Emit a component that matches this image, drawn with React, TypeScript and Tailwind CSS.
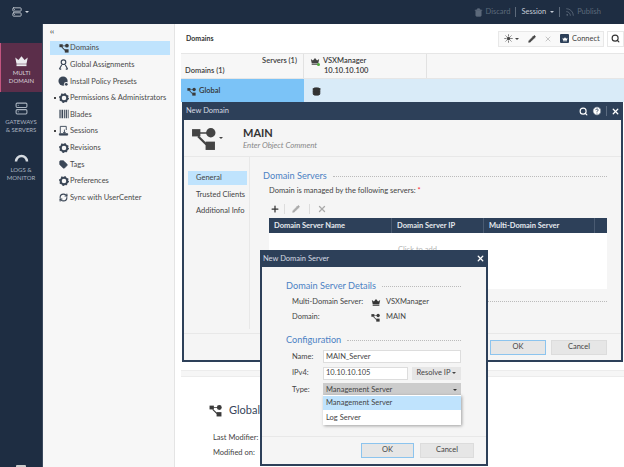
import { Search, HelpCircle, X, Plus, Pencil, Trash2, Rss, RefreshCw, Tag, Server, Database, Sun } from "lucide-react";

const font = { fontFamily: 'Lato, "Noto Sans", sans-serif' };

function Caret({ className = "" }: { className?: string }) {
  return <span className={`inline-block h-0 w-0 border-x-[2px] border-t-[2px] border-x-transparent border-t-current ${className}`} />;
}

function TreeIcon({ size = 12, color = "#3a3a3a" }: { size?: number; color?: string }) {
  return (
    <svg width={size} height={size} viewBox="0 0 24 24" fill={color}>
      <rect x="1" y="3" width="8" height="7" />
      <circle cx="19" cy="6.5" r="4.5" />
      <rect x="14" y="15" width="9" height="8" />
      <path d="M8 6h8v1.500H8zM7.500 9l8 8-1.500 1.500-8-8z" />
    </svg>
  );
}

function CrownIcon({ size = 12, color = "#333" }: { size?: number; color?: string }) {
  return (
    <svg width={size} height={size} viewBox="0 0 24 24" fill={color}>
      <path d="M2 7l5 4 5-6 5 6 5-4-2 10H4z" />
      <rect x="4" y="18" width="16" height="3" />
    </svg>
  );
}

function GearIcon() {
  return (
    <svg width="10" height="10" viewBox="0 0 24 24">
      <circle cx="12" cy="12" r="8" fill="none" stroke="#3a4656" strokeWidth="5" />
      <circle cx="12" cy="12" r="10.500" fill="none" stroke="#3a4656" strokeWidth="3" strokeDasharray="3.500 4.700" />
    </svg>
  );
}

function GaugeArc() {
  return (
    <svg width="15" height="10" viewBox="0 0 30 20" fill="none" stroke="#d5dae0" strokeWidth="5">
      <path d="M4 19a11 11 0 0 1 22 0" />
    </svg>
  );
}

function NavIcon({ kind }: { kind: string }) {
  if (kind === "tree") return <TreeIcon size={10} />;
  if (kind === "gear") return <GearIcon />;
  if (kind === "tag") return <Tag size={9} fill="#3a4656" color="#3a4656" />;
  if (kind === "sync") return <RefreshCw size={9} color="#3a4656" strokeWidth={3} />;
  if (kind === "person")
    return (
      <svg width="11" height="11" viewBox="0 0 24 24" fill="none" stroke="#3a4656" strokeWidth="2.500">
        <circle cx="12" cy="7" r="5" />
        <path d="M3 22l5-9M21 22l-5-9M3 22h4M17 22h4" />
      </svg>
    );
  if (kind === "preset")
    return (
      <svg width="11" height="11" viewBox="0 0 24 24" fill="#3a4656">
        <circle cx="11" cy="11" r="10" />
        <circle cx="18" cy="18" r="5" fill="#f7f7f7" />
        <circle cx="18" cy="18" r="3" />
      </svg>
    );
  if (kind === "blades")
    return (
      <svg width="10" height="10" viewBox="0 0 24 24" fill="#3a4656">
        <path d="M1 2h3v20H1zM6 2h4v20H6zM12 2h2v20h-2zM16 2h3v20h-3zM21 2h2v20h-2z" />
      </svg>
    );
  return (
    <svg width="11" height="11" viewBox="0 0 24 24" fill="none" stroke="#3a4656" strokeWidth="2">
      <path d="M5 18V3h13v8" />
      <path d="M3 19h18v3H3z" fill="#3a4656" />
      <path d="M14 10v8M11 15l3 3 3-3" />
    </svg>
  );
}

const navItems = [
  { label: "Domains", icon: "tree", active: true },
  { label: "Global Assignments", icon: "person" },
  { label: "Install Policy Presets", icon: "preset" },
  { label: "Permissions & Administrators", icon: "gear", arrow: true },
  { label: "Blades", icon: "blades" },
  { label: "Sessions", icon: "session", arrow: true },
  { label: "Revisions", icon: "gear" },
  { label: "Tags", icon: "tag" },
  { label: "Preferences", icon: "gear" },
  { label: "Sync with UserCenter", icon: "sync" },
];

function LeftRail() {
  return (
    <div className="flex w-[42px] shrink-0 flex-col pt-[19px] text-[6px] leading-[7.500px] text-[#aab4c0]">
      <div className="flex h-[49px] flex-col items-center border-l border-[#c2557f] bg-[#5b2e4a] pt-[10px] text-center text-[#d9d3d9]">
        <CrownIcon size={15} color="#ecebef" />
        <div className="mt-[1px]">MULTI<br />DOMAIN</div>
      </div>
      <div className="mt-[10px] flex flex-col items-center text-center">
        <Server size={13} color="#aab4c0" />
        <div className="mt-[3px]">GATEWAYS<br />&amp; SERVERS</div>
      </div>
      <div className="mt-[19px] flex flex-col items-center text-center">
        <GaugeArc />
        <div className="mt-[4px]">LOGS &amp;<br />MONITOR</div>
      </div>
      <div className="mx-auto mt-auto h-[2px] w-[10px] rounded-t-[1px] bg-[#ccc]" />
    </div>
  );
}

function Sidebar() {
  return (
    <div className="w-[133px] shrink-0 border-x border-[#e4e4e4] border-l-[#3b4a5e] bg-[#f7f7f7] pl-[7px] pr-1 text-[7.500px] text-[#4a4a4a]">
      <div className="h-[17px] text-[7px] font-bold leading-[14px] text-[#333]">‹‹</div>
      <div className="flex flex-col gap-[2.600px]">
        {navItems.map((item) => (
          <div key={item.label} className={`relative flex h-[14px] items-center gap-[1px] pl-[8px] ${item.active ? "bg-[#bfe3fd]" : ""}`}>
            {item.arrow && <span className="absolute left-[4px] top-[6px] h-[2px] w-[2px] bg-[#444]" />}
            <span className="flex w-[11px] justify-center">
              <NavIcon kind={item.icon} />
            </span>
            <span className="whitespace-nowrap">{item.label}</span>
          </div>
        ))}
      </div>
    </div>
  );
}

function MainPanel() {
  return (
    <div className="flex min-w-0 flex-1 flex-col bg-white pl-[6px]">
      <div className="flex h-[29px] items-center justify-between pl-[5px]">
        <span className="text-[7px] font-bold text-[#333]">Domains</span>
        <div className="flex items-center">
          <div className="flex h-[16px] w-[106px] items-center border border-[#e8e8e8] bg-[#f9f9f9] pl-[5px] text-[#444]">
            <Sun size={9} fill="#444" />
            <Caret className="ml-[2px]" />
            <Pencil size={8} fill="#444" className="ml-[9px]" />
            <X size={8} color="#aaa" className="ml-[8px]" />
            <span className="ml-[8px] flex items-center gap-[3px] text-[7.500px]">
              <span className="flex h-[9px] w-[9px] items-center justify-center rounded-[1px] bg-[#2d4059]">
                <CrownIcon size={6} color="#fff" />
              </span>
              Connect
            </span>
          </div>
          <div className="ml-[3px] flex h-[16px] w-[17px] items-center border border-[#e8e8e8] pl-[3px]">
            <Search size={9} color="#333" strokeWidth={3} />
          </div>
        </div>
      </div>
      <div className="flex h-[26px] border-y border-[#e6e6e6] bg-[#f7f7f7] text-[7.500px] font-semibold text-[#3a3a3a]">
        <div className="flex w-[123px] flex-col border-r border-[#e2e2e2] px-[1px] pt-[2px] leading-[10px]">
          <div className="pr-[5px] text-right">Servers (1)</div>
          <div className="pl-[3px]">Domains (1)</div>
        </div>
        <div className="w-[123px] border-r border-[#e2e2e2] pl-[6px] pt-[2px] leading-[10px]">
          <div className="flex items-center gap-[3px]">
            <span className="relative">
              <CrownIcon size={10} color="#444" />
              <span className="absolute bottom-0 right-0 h-[3px] w-[3px] rounded-full bg-[#4fae3c]" />
            </span>
            VSXManager
          </div>
          <div className="pl-[14px]">10.10.10.100</div>
        </div>
      </div>
      <div className="flex h-[23px] bg-[#d9ebf8] pt-[1px] text-[7.500px] font-semibold text-[#333]">
        <div className="-mt-[1px] flex w-[123px] items-center gap-[3px] bg-[#7bc3f7] pl-[6px] pt-[1px]">
          <TreeIcon size={9} />
          Global
        </div>
        <div className="flex items-center pl-[8px]">
          <Database size={9} color="#333" fill="#333" />
        </div>
      </div>
      <div className="h-[259px] shrink-0" />
      <div className="mt-[9px] h-[7px] border-y border-[#ececec] bg-[#f6f6f6]" />
      <div className="flex-1 pl-[28px] pt-[25px] text-[7.500px] text-[#444]">
        <div className="flex items-center gap-[7px] text-[11px] text-[#38465a]">
          <TreeIcon size={13} />
          Global
        </div>
        <div className="ml-[4px] mt-[11px] leading-[15px]">
          Last Modifier:
          <br />
          Modified on:
        </div>
      </div>
    </div>
  );
}

function Heading({ text }: { text: string }) {
  return (
    <div className="flex items-center gap-[6px] text-[9.200px] leading-[13px] text-[#4c82c4]">
      <span className="whitespace-nowrap">{text}</span>
      <span className="mt-[1px] flex-1 border-t border-dotted border-[#bbb]" />
    </div>
  );
}

function DialogButton({ label, primary, w }: { label: string; primary?: boolean; w: string }) {
  return (
    <div className={`flex h-[15px] items-center justify-center border bg-[#e6e6e6] text-[7.500px] text-[#444] ${w} ${primary ? "border-[#8cc4ee]" : "border-[#dcdcdc]"}`}>
      {label}
    </div>
  );
}

function NewDomainDialog() {
  return (
    <div className="absolute left-[182px] top-[102px] flex h-[260px] w-[441px] flex-col border-2 border-t-0 border-[#2d4059] bg-[#f5f5f5] text-[7.500px] text-[#444]">
      <div className="flex h-[18px] shrink-0 items-center justify-between bg-[#2d4059] pl-[2px] pr-[1px] text-[#d5dbe3]">
        <span>New Domain</span>
        <div className="flex items-center gap-[4px] text-white">
          <Search size={9} strokeWidth={3} />
          <HelpCircle size={10} fill="#fff" color="#2d4059" />
          <span className="h-[10px] border-l border-[#5b6b80]" />
          <X size={9} strokeWidth={3.500} />
        </div>
      </div>
      <div className="flex h-[37px] shrink-0 border-b border-[#e8e8e8]">
        <div className="flex w-[59px] items-center pl-[7px]">
          <TreeIcon size={25} color="#444" />
          <Caret className="ml-[3px] text-[#444]" />
        </div>
        <div className="pt-[6px]">
          <div className="text-[11px] font-bold leading-[13px] text-[#333]">MAIN</div>
          <div className="mt-[1px] text-[7.800px] italic text-[#888]">Enter Object Comment</div>
        </div>
      </div>
      <div className="flex min-h-0 flex-1">
        <div className="mb-[4px] flex w-[66px] shrink-0 flex-col gap-[2.500px] border-r border-[#e8e8e8] pl-[4px] pr-[2px] pt-[14px]">
          <div className="flex h-[14px] items-center bg-[#bfe3fd] pl-[8px]">General</div>
          <div className="flex h-[14px] items-center whitespace-nowrap pl-[8px]">Trusted Clients</div>
          <div className="flex h-[14px] items-center whitespace-nowrap pl-[8px]">Additional Info</div>
        </div>
        <div className="flex-1 pl-[13px] pr-[14px] pt-[12px]">
          <Heading text="Domain Servers" />
          <div className="mt-[4px] pl-[6px] leading-[10px]">
            Domain is managed by the following servers: <span className="text-red-500">*</span>
          </div>
          <div className="mt-[6px] flex h-[14px] items-center pl-[7px]">
            <Plus size={10} color="#333" strokeWidth={3} />
            <span className="ml-[4px] h-[10px] border-l border-[#ddd]" />
            <Pencil size={8} color="#aaa" fill="#aaa" className="ml-[7px]" />
            <span className="ml-[9px] h-[10px] border-l border-[#ddd]" />
            <X size={10} color="#aaa" strokeWidth={3} className="ml-[7px]" />
          </div>
          <div className="ml-[6px] mt-[2px] flex h-[15px] bg-[#2d4059] font-bold text-[#e6eaef]">
            <div className="flex w-[123px] items-center border-r border-[#4a5b72] pl-[5px]">Domain Server Name</div>
            <div className="flex w-[92px] items-center border-r border-[#4a5b72] pl-[5px]">Domain Server IP</div>
            <div className="flex w-[111px] items-center border-r border-[#4a5b72] pl-[5px]">Multi-Domain Server</div>
          </div>
          <div className="ml-[6px] h-[56px] bg-white pl-[129px] pt-[11px] text-[#b5b5b5]">Click to add</div>
          <div className="mt-[12px] border-t border-dotted border-[#bbb]" />
        </div>
      </div>
      <div className="flex h-[27px] shrink-0 items-center justify-end gap-[5px] border-t border-[#e8e8e8] pr-[14px]">
        <DialogButton label="OK" primary w="w-[56px]" />
        <DialogButton label="Cancel" w="w-[56px]" />
      </div>
    </div>
  );
}

function FormRow({ label, children }: { label: string; children: React.ReactNode }) {
  return (
    <div className="flex h-[13px] items-center">
      <span className="w-[31px] shrink-0">{label}</span>
      {children}
    </div>
  );
}

function NewServerDialog() {
  return (
    <div className="absolute left-[260px] top-[250px] flex h-[216px] w-[228px] flex-col border-2 border-t-0 border-[#2d4059] bg-[#f5f5f5] text-[7.500px] text-[#444]">
      <div className="flex h-[17px] shrink-0 items-center justify-between bg-[#2d4059] pl-[1px] pr-[1px] text-[#d5dbe3]">
        <span>New Domain Server</span>
        <X size={9} color="#fff" strokeWidth={3.500} />
      </div>
      <div className="relative flex-1 pl-[24px] pr-[25px] pt-[12px]">
        <Heading text="Domain Server Details" />
        <div className="mt-[4px] flex flex-col gap-[3px] pl-[6px]">
          <div className="flex h-[12px] items-center">
            <span className="w-[79px] whitespace-nowrap">Multi-Domain Server:</span>
            <CrownIcon size={10} color="#333" />
            <span className="ml-[5px]">VSXManager</span>
          </div>
          <div className="flex h-[12px] items-center">
            <span className="w-[79px]">Domain:</span>
            <TreeIcon size={9} />
            <span className="ml-[6px]">MAIN</span>
          </div>
        </div>
        <div className="mt-[10px]">
          <Heading text="Configuration" />
        </div>
        <div className="mt-[4px] flex flex-col gap-[3.500px] pl-[6px]">
          <FormRow label="Name:">
            <div className="flex h-[13px] w-[138px] items-center border border-[#ddd] bg-white pl-[2px]">MAIN_Server</div>
          </FormRow>
          <FormRow label="IPv4:">
            <div className="flex h-[13px] w-[85px] items-center border border-[#ddd] bg-white pl-[2px]">10.10.10.105</div>
            <div className="ml-[4px] flex h-[13px] w-[49px] items-center justify-center gap-[2px] bg-[#e6e6e6]">
              Resolve IP <Caret />
            </div>
          </FormRow>
          <FormRow label="Type:">
            <div className="flex h-[13px] w-[138px] items-center justify-between bg-[#cccccc] pl-[3px] pr-[4px]">
              Management Server <Caret className="text-[#333]" />
            </div>
          </FormRow>
        </div>
        <div className="absolute left-[61px] top-[128px] w-[138px] bg-white pt-[1px] shadow-[1px_1px_3px_rgba(0,0,0,0.35)]">
          <div className="flex h-[14px] items-center bg-[#bfe3fd] pl-[3px]">Management Server</div>
          <div className="flex h-[15px] items-center pl-[3px]">Log Server</div>
        </div>
      </div>
      <div className="flex h-[28px] shrink-0 items-center justify-end gap-[6px] border-t border-[#e8e8e8] pb-[1px] pr-[12px]">
        <DialogButton label="OK" primary w="w-[53px]" />
        <DialogButton label="Cancel" w="w-[54px]" />
      </div>
    </div>
  );
}

export default function App() {
  return (
    <div className="relative flex h-[467px] w-[624px] flex-col overflow-hidden bg-[#1e2d42]" style={font}>
      <div className="flex h-[24px] shrink-0 items-center text-[7.500px] text-[#5d6a7b]">
        <div className="ml-[12px] flex items-center gap-[3px] text-[#cfd5dc]">
          <Server size={10} />
          <Caret />
        </div>
        <div className="ml-auto flex items-center pr-[23px]">
          <Trash2 size={9} fill="#5d6a7b" />
          <span className="ml-[3px]">Discard</span>
          <span className="mx-[5px] h-[10px] border-l border-[#5d6a7b]" />
          <span className="text-[#c5ccd5]">Session</span>
          <Caret className="ml-[4px] text-[#c5ccd5]" />
          <span className="mx-[5px] h-[10px] border-l border-[#5d6a7b]" />
          <Rss size={10} />
          <span className="ml-[2px]">Publish</span>
        </div>
      </div>
      <div className="flex min-h-0 flex-1">
        <LeftRail />
        <Sidebar />
        <MainPanel />
      </div>
      <NewDomainDialog />
      <NewServerDialog />
    </div>
  );
}
